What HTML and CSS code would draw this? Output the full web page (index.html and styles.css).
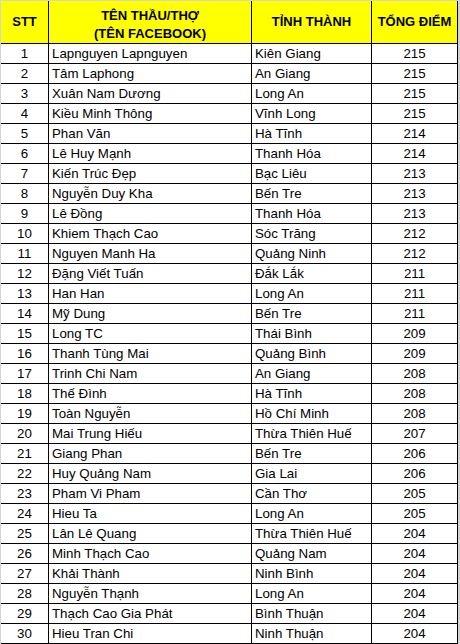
FILE: index.html
```html
<!DOCTYPE html>
<html lang="vi">
<head>
<meta charset="utf-8">
<link rel="stylesheet" href="styles.css">
</head>
<body>
<table class="sheet">
  <colgroup>
    <col class="c-stt"><col class="c-name"><col class="c-prov"><col class="c-score">
  </colgroup>
  <thead>
    <tr>
      <th class="mid">STT</th>
      <th class="two">TÊN THẦU/THỢ<br>(TÊN FACEBOOK)</th>
      <th class="mid">TỈNH THÀNH</th>
      <th class="mid">TỔNG ĐIỂM</th>
    </tr>
  </thead>
  <tbody>
    <tr><td class="num">1</td><td>Lapnguyen Lapnguyen</td><td>Kiên Giang</td><td class="num">215</td></tr>
    <tr><td class="num">2</td><td>Tâm Laphong</td><td>An Giang</td><td class="num">215</td></tr>
    <tr><td class="num">3</td><td>Xuân Nam Dương</td><td>Long An</td><td class="num">215</td></tr>
    <tr><td class="num">4</td><td>Kiều Minh Thông</td><td>Vĩnh Long</td><td class="num">215</td></tr>
    <tr><td class="num">5</td><td>Phan Văn</td><td>Hà Tĩnh</td><td class="num">214</td></tr>
    <tr><td class="num">6</td><td>Lê Huy Mạnh</td><td>Thanh Hóa</td><td class="num">214</td></tr>
    <tr><td class="num">7</td><td>Kiến Trúc Đẹp</td><td>Bạc Liêu</td><td class="num">213</td></tr>
    <tr><td class="num">8</td><td>Nguyễn Duy Kha</td><td>Bến Tre</td><td class="num">213</td></tr>
    <tr><td class="num">9</td><td>Lê Đồng</td><td>Thanh Hóa</td><td class="num">213</td></tr>
    <tr><td class="num">10</td><td>Khiem Thạch Cao</td><td>Sóc Trăng</td><td class="num">212</td></tr>
    <tr><td class="num">11</td><td>Nguyen Manh Ha</td><td>Quảng Ninh</td><td class="num">212</td></tr>
    <tr><td class="num">12</td><td>Đặng Viết Tuấn</td><td>Đắk Lắk</td><td class="num">211</td></tr>
    <tr><td class="num">13</td><td>Han Han</td><td>Long An</td><td class="num">211</td></tr>
    <tr><td class="num">14</td><td>Mỹ Dung</td><td>Bến Tre</td><td class="num">211</td></tr>
    <tr><td class="num">15</td><td>Long TC</td><td>Thái Bình</td><td class="num">209</td></tr>
    <tr><td class="num">16</td><td>Thanh Tùng Mai</td><td>Quảng Bình</td><td class="num">209</td></tr>
    <tr><td class="num">17</td><td>Trinh Chi Nam</td><td>An Giang</td><td class="num">208</td></tr>
    <tr><td class="num">18</td><td>Thế Đình</td><td>Hà Tĩnh</td><td class="num">208</td></tr>
    <tr><td class="num">19</td><td>Toàn Nguyễn</td><td>Hồ Chí Minh</td><td class="num">208</td></tr>
    <tr><td class="num">20</td><td>Mai Trung Hiếu</td><td>Thừa Thiên Huế</td><td class="num">207</td></tr>
    <tr><td class="num">21</td><td>Giang Phan</td><td>Bến Tre</td><td class="num">206</td></tr>
    <tr><td class="num">22</td><td>Huy Quảng Nam</td><td>Gia Lai</td><td class="num">206</td></tr>
    <tr><td class="num">23</td><td>Pham Vi Pham</td><td>Cần Thơ</td><td class="num">205</td></tr>
    <tr><td class="num">24</td><td>Hieu Ta</td><td>Long An</td><td class="num">205</td></tr>
    <tr><td class="num">25</td><td>Lân Lê Quang</td><td>Thừa Thiên Huế</td><td class="num">204</td></tr>
    <tr><td class="num">26</td><td>Minh Thạch Cao</td><td>Quảng Nam</td><td class="num">204</td></tr>
    <tr><td class="num">27</td><td>Khải Thành</td><td>Ninh Bình</td><td class="num">204</td></tr>
    <tr><td class="num">28</td><td>Nguyễn Thạnh</td><td>Long An</td><td class="num">204</td></tr>
    <tr><td class="num">29</td><td>Thạch Cao Gia Phát</td><td>Bình Thuận</td><td class="num">204</td></tr>
    <tr><td class="num">30</td><td>Hieu Tran Chi</td><td>Ninh Thuận</td><td class="num">204</td></tr>
  </tbody>
</table>
</body>
</html>
```

FILE: styles.css
```css
html {
  background: #d4d4d4;
}
body {
  margin: 0;
  padding: 1px 0 0 1px;
  background: #d4d4d4;
  font-family: "Liberation Sans", Arial, sans-serif;
  color: #000;
}
.sheet {
  border-collapse: separate;
  border-spacing: 0;
  table-layout: fixed;
  width: 457px;
  background: #fff;
}
.c-stt { width: 48px; }
.c-name { width: 203px; }
.c-prov { width: 120px; }
.c-score { width: 86px; }

.sheet th,
.sheet td {
  border-right: 1px solid #000;
  border-bottom: 1px solid #000;
  padding: 0 3px;
  white-space: nowrap;
  overflow: hidden;
}
.sheet th {
  background: #ffff00;
  font-size: 13px;
  font-weight: bold;
  text-align: center;
  height: 42px;
  line-height: 18px;
  padding: 0;
}
.sheet th.mid { vertical-align: middle; }
.sheet th.two { vertical-align: bottom; }

.sheet td {
  font-size: 13.3px;
  line-height: 19px;
  text-align: left;
  vertical-align: bottom;
}
.sheet td.num {
  text-align: center;
}
```
